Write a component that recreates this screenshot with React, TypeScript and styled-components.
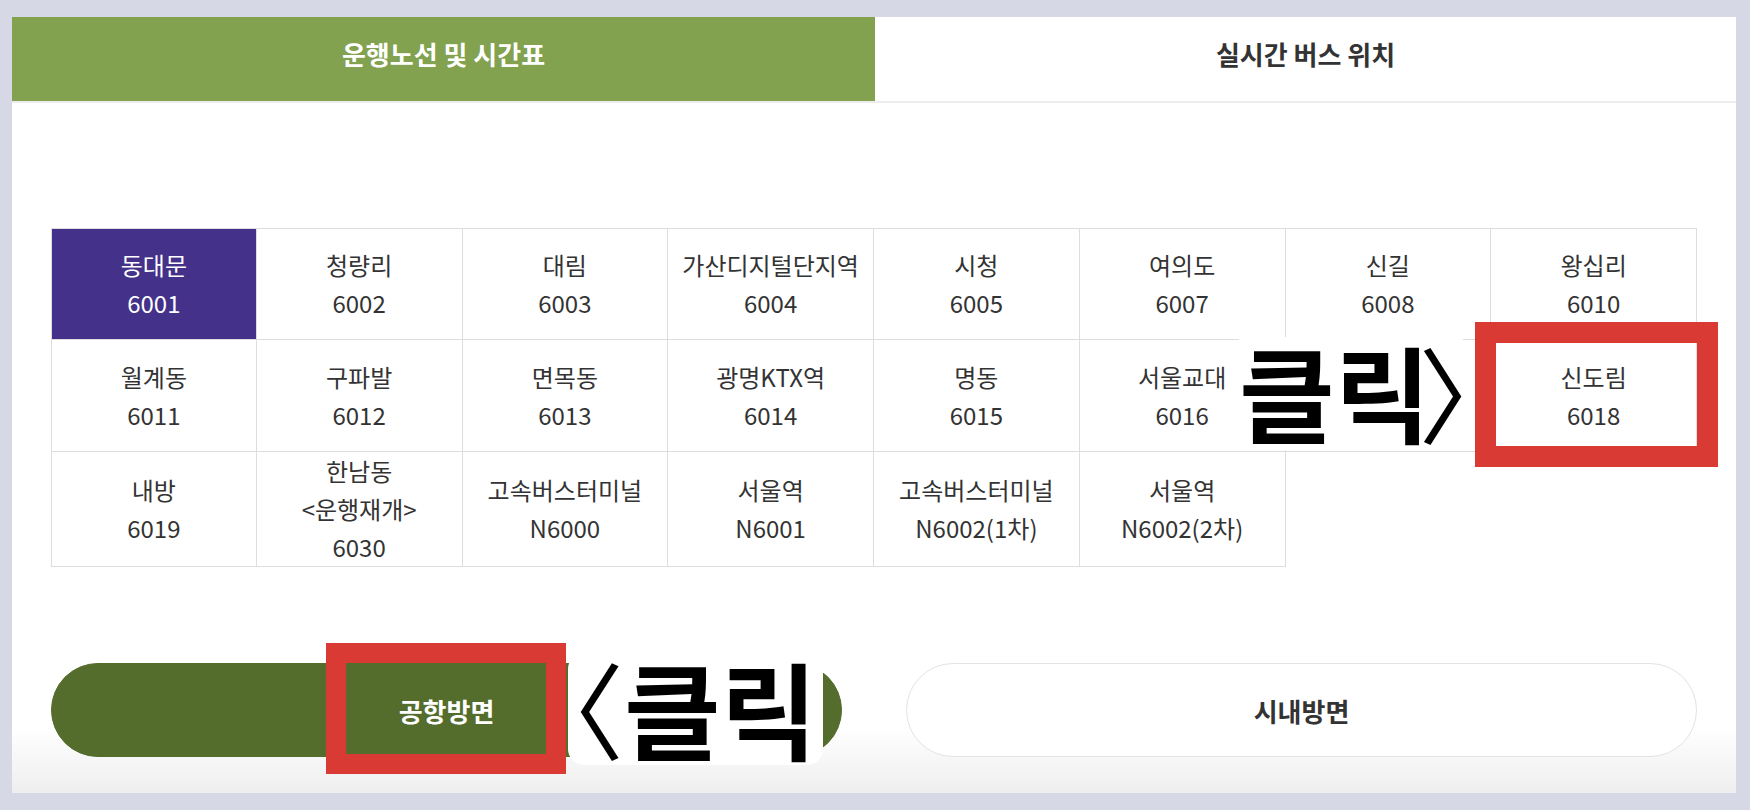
import React from "react";
import styled, { createGlobalStyle } from "styled-components";

const GlobalStyle = createGlobalStyle`
  html, body {
    margin: 0;
    padding: 0;
    background: #d6d9e5;
  }
  body {
    font-family: "Noto Sans CJK KR", "Noto Sans", sans-serif;
  }
`;

const Page = styled.div`
  width: 1750px;
  height: 810px;
  box-sizing: border-box;
  padding: 17px 14px 17px 12px;
`;

const Panel = styled.div`
  height: 100%;
  background: linear-gradient(to bottom, #ffffff calc(100% - 66px), #eeeeee 100%);
  display: flex;
  flex-direction: column;
`;

const TabBar = styled.div`
  display: grid;
  grid-template-columns: 863px 1fr;
  border-bottom: 2px solid #ececec;
`;

const Tab = styled.div<{ $active?: boolean }>`
  height: 84px;
  box-sizing: border-box;
  padding-bottom: 12px;
  display: flex;
  align-items: center;
  justify-content: center;
  font-size: 26px;
  font-weight: 700;
  background: ${(p) => (p.$active ? "#82a24f" : "#ffffff")};
  color: ${(p) => (p.$active ? "#ffffff" : "#333333")};
`;

const Body = styled.div`
  padding: 125px 39px 0;
`;

const StopGrid = styled.div`
  position: relative;
  display: grid;
  grid-template-columns: repeat(8, 1fr);
  grid-auto-rows: minmax(112px, auto);
`;

const StopCell = styled.div<{ $active?: boolean }>`
  box-sizing: border-box;
  display: flex;
  flex-direction: column;
  align-items: center;
  justify-content: center;
  border-right: 1px solid #dddddd;
  border-bottom: 1px solid #dddddd;
  font-size: 24px;
  line-height: 38px;
  text-align: center;
  white-space: nowrap;
  background: ${(p) => (p.$active ? "#43318a" : "#ffffff")};
  color: ${(p) => (p.$active ? "#ffffff" : "#333333")};

  &:nth-child(-n + 8) {
    border-top: 1px solid #dddddd;
  }
  &:nth-child(8n + 1) {
    border-left: 1px solid #dddddd;
  }
`;

const DirectionRow = styled.div`
  position: relative;
  display: grid;
  grid-template-columns: 1fr 1fr;
  gap: 64px;
  margin-top: 96px;
`;

const DirectionButton = styled.button<{ $active?: boolean }>`
  height: 94px;
  border-radius: 47px;
  font-family: inherit;
  font-size: 26px;
  font-weight: 700;
  cursor: pointer;
  border: 1px solid ${(p) => (p.$active ? "#546c2c" : "#e3e3e3")};
  background: ${(p) => (p.$active ? "#546c2c" : "#ffffff")};
  color: ${(p) => (p.$active ? "#ffffff" : "#333333")};
`;

/* screenshot annotations drawn over the page */
const RedFrame = styled.div`
  position: absolute;
  box-sizing: border-box;
  border: 21px solid #d93a34;
  pointer-events: none;
`;

const CellFrame = styled(RedFrame)`
  left: 1424px;
  top: 94px;
  width: 243px;
  height: 145px;
`;

const ButtonFrame = styled(RedFrame)`
  left: 275px;
  top: -20px;
  width: 240px;
  height: 131px;
  border-width: 20px;
`;

const Callout = styled.div`
  position: absolute;
  background: #ffffff;
  color: #000000;
  font-weight: 700;
  white-space: nowrap;
  overflow: visible;
`;

const GridCallout = styled(Callout)`
  left: 1188px;
  top: 109px;
  width: 224px;
  height: 113px;
  font-size: 104px;
  line-height: 108px;
`;

const ButtonCallout = styled(Callout)`
  left: 517px;
  top: -10px;
  width: 255px;
  height: 112px;
  font-size: 105px;
  line-height: 106px;
  border-radius: 16px;
`;

const Bracket = styled.span<{ $shift: number }>`
  font-weight: 400;
  margin-left: ${(p) => p.$shift}px;
`;

const stops = [
  ["동대문", "6001"],
  ["청량리", "6002"],
  ["대림", "6003"],
  ["가산디지털단지역", "6004"],
  ["시청", "6005"],
  ["여의도", "6007"],
  ["신길", "6008"],
  ["왕십리", "6010"],
  ["월계동", "6011"],
  ["구파발", "6012"],
  ["면목동", "6013"],
  ["광명KTX역", "6014"],
  ["명동", "6015"],
  ["서울교대", "6016"],
  [],
  ["신도림", "6018"],
  ["내방", "6019"],
  ["한남동", "<운행재개>", "6030"],
  ["고속버스터미널", "N6000"],
  ["서울역", "N6001"],
  ["고속버스터미널", "N6002(1차)"],
  ["서울역", "N6002(2차)"],
];

export default function App() {
  return (
    <Page>
      <GlobalStyle />
      <Panel>
        <TabBar>
          <Tab $active>운행노선 및 시간표</Tab>
          <Tab>실시간 버스 위치</Tab>
        </TabBar>
        <Body>
          <StopGrid>
            {stops.map((lines, i) => (
              <StopCell key={i} $active={i === 0}>
                {lines.map((l) => (
                  <div key={l}>{l}</div>
                ))}
              </StopCell>
            ))}
            <GridCallout>
              클릭<Bracket $shift={-12}>〉</Bracket>
            </GridCallout>
            <CellFrame />
          </StopGrid>
          <DirectionRow>
            <DirectionButton $active>공항방면</DirectionButton>
            <DirectionButton>시내방면</DirectionButton>
            <ButtonCallout>
              <Bracket $shift={-49}>〈</Bracket>클릭
            </ButtonCallout>
            <ButtonFrame />
          </DirectionRow>
        </Body>
      </Panel>
    </Page>
  );
}
